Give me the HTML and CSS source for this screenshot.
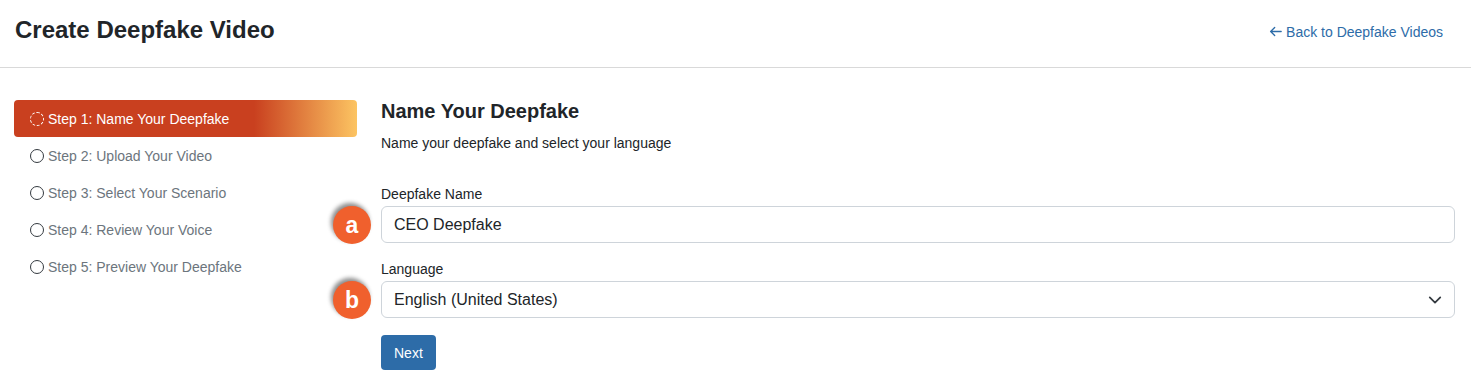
FILE: index.html
```html
<!DOCTYPE html>
<html lang="en">
<head>
    <meta charset="UTF-8">
    <meta name="viewport" content="width=device-width, initial-scale=1.0">
    <title>Create Deepfake Video</title>
    <link rel="stylesheet" href="styles.css">
</head>
<body>
    <header class="page-header">
        <h1>Create Deepfake Video</h1>
        <a href="#" class="back-link">
            <svg width="13" height="13" viewBox="0 0 16 16"><path d="M15 8H2M7 3L2 8l5 5" fill="none" stroke="#2d6ca8" stroke-width="1.6" stroke-linecap="round" stroke-linejoin="round"/></svg>
            Back to Deepfake Videos
        </a>
    </header>

    <div class="wizard">
        <nav class="steps">
            <div class="step active"><span class="step-icon"></span>Step 1: Name Your Deepfake</div>
            <div class="step"><span class="step-icon"></span>Step 2: Upload Your Video</div>
            <div class="step"><span class="step-icon"></span>Step 3: Select Your Scenario</div>
            <div class="step"><span class="step-icon"></span>Step 4: Review Your Voice</div>
            <div class="step"><span class="step-icon"></span>Step 5: Preview Your Deepfake</div>
        </nav>

        <section class="step-form">
            <h2>Name Your Deepfake</h2>
            <p class="subtitle">Name your deepfake and select your language</p>

            <div class="field">
                <label for="name">Deepfake Name</label>
                <div class="control">
                    <span class="badge">a</span>
                    <input id="name" class="input" type="text" value="CEO Deepfake">
                </div>
            </div>

            <div class="field">
                <label for="lang">Language</label>
                <div class="control">
                    <span class="badge">b</span>
                    <div class="input select" id="lang">
                        <span>English (United States)</span>
                        <svg width="14" height="14" viewBox="0 0 16 16"><path d="M2 5l6 6 6-6" fill="none" stroke="#343a40" stroke-width="2" stroke-linecap="round" stroke-linejoin="round"/></svg>
                    </div>
                </div>
            </div>

            <button class="btn-next">Next</button>
        </section>
    </div>
</body>
</html>
```

FILE: styles.css
```css
* {
    margin: 0;
    padding: 0;
    box-sizing: border-box;
    font-family: 'Liberation Sans', Arial, sans-serif;
}

body {
    background: #fff;
    color: #212529;
}

.page-header {
    display: flex;
    justify-content: space-between;
    align-items: center;
    height: 68px;
    padding: 0 28px 8px 15px;
    border-bottom: 1px solid #d9d9d9;
}

.page-header h1 {
    font-size: 24px;
    font-weight: bold;
    color: #212529;
}

.back-link {
    display: flex;
    align-items: center;
    gap: 4px;
    color: #2d6ca8;
    font-size: 14px;
    text-decoration: none;
    margin-top: 4px;
}

.wizard {
    display: flex;
    gap: 24px;
    padding: 32px 16px 0 14px;
}

.steps {
    width: 343px;
    flex-shrink: 0;
}

.step {
    display: flex;
    align-items: center;
    height: 37px;
    padding-left: 16px;
    font-size: 14px;
    color: #6c757d;
}

.step-icon {
    width: 14px;
    height: 14px;
    border: 1.5px solid #343a40;
    border-radius: 50%;
    margin-right: 4px;
}

.step.active {
    background: linear-gradient(to right, #c9401f 0%, #c9401f 70%, #fcc462 100%);
    border-radius: 4px;
    color: #fff;
}

.step.active .step-icon {
    border: 1.5px dashed #fff;
}

.step-form {
    flex: 1;
}

.step-form h2 {
    font-size: 20px;
    font-weight: bold;
    margin-bottom: 12px;
}

.subtitle {
    font-size: 14px;
    margin-bottom: 35px;
}

.field {
    margin-bottom: 18px;
}

.field label {
    display: block;
    font-size: 14px;
    margin-bottom: 4px;
}

.control {
    position: relative;
}

.badge {
    position: absolute;
    left: -48px;
    top: 0;
    width: 38px;
    height: 38px;
    border-radius: 50%;
    background: #f0602d;
    color: #fff;
    font-size: 23px;
    font-weight: bold;
    display: flex;
    align-items: center;
    justify-content: center;
    box-shadow: -2px -3px 4px rgba(0, 0, 0, 0.45);
}

.input {
    display: block;
    width: 100%;
    height: 37px;
    padding: 0 12px;
    font-size: 16px;
    color: #212529;
    border: 1px solid #ced4da;
    border-radius: 6px;
    background: #fff;
    outline: none;
}

.select {
    display: flex;
    align-items: center;
    justify-content: space-between;
    padding-right: 12px;
}

.btn-next {
    background: #2d6ca8;
    color: #fff;
    border: none;
    border-radius: 4px;
    font-size: 14px;
    padding: 0 13px;
    height: 35px;
    margin-top: -1px;
}
```
